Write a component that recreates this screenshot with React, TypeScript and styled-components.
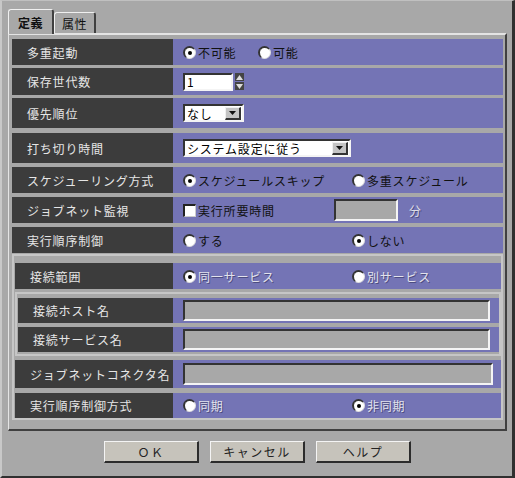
import React from 'react';
import styled, { createGlobalStyle } from 'styled-components';

const GlobalStyle = createGlobalStyle`
  html, body {
    margin: 0;
    padding: 0;
    background: #a8a8a8;
  }
  * { box-sizing: border-box; }
`;

const FONT = `"Noto Sans CJK JP", "Noto Sans", sans-serif`;
const BLUE = '#7474b5';
const DARK = '#3c3c3c';
const GRAY = '#a8a8a8';

const Window = styled.div`
  width: 515px;
  height: 478px;
  background: ${GRAY};
  font-family: ${FONT};
  font-size: 12px;
  border-left: 2px solid #c8c8c8;
  border-top: 1px solid #c0c0c0;
  border-right: 3px solid #303030;
  border-bottom: 2px solid #303030;
  display: flex;
  flex-direction: column;
  padding: 7px 3px 0 6px;
`;

const TabBar = styled.div`
  display: flex;
  align-items: flex-end;
  height: 25px;
`;

const Tab = styled.div<{ $active?: boolean }>`
  height: ${(p) => (p.$active ? 25 : 21)}px;
  padding: 0 ${(p) => (p.$active ? 9 : 7)}px;
  display: flex;
  align-items: center;
  font-weight: ${(p) => (p.$active ? 700 : 400)};
  color: #111;
  border-top: 1px solid #f0f0f0;
  border-left: 1px solid #f0f0f0;
  border-right: 2px solid #404040;
  border-radius: 3px 3px 0 0;
  margin-bottom: ${(p) => (p.$active ? -1 : 0)}px;
  background: ${GRAY};
  position: relative;
  z-index: ${(p) => (p.$active ? 2 : 1)};
  letter-spacing: 0.5px;
`;

const Panel = styled.div`
  width: 499px;
  height: 398px;
  border-top: 2px solid #e4e4e4;
  border-left: 1px solid #e4e4e4;
  border-right: 2px solid #404040;
  border-bottom: 2px solid #404040;
  padding: 4px 2px 0 3px;
  display: flex;
  flex-direction: column;
`;

const Row = styled.div<{ $h: number; $mt?: number }>`
  display: flex;
  height: ${(p) => p.$h}px;
  margin-top: ${(p) => p.$mt ?? 0}px;
`;

const LabelCell = styled.div<{ $w: number }>`
  width: ${(p) => p.$w}px;
  flex: none;
  background: ${DARK};
  color: #e6e6e6;
  display: flex;
  align-items: center;
  padding-left: 15px;
  letter-spacing: 0.8px;
  white-space: nowrap;
`;

const ValueCell = styled.div`
  flex: 1;
  background: ${BLUE};
  display: flex;
  align-items: center;
  padding-left: 10px;
  color: #111;
  letter-spacing: 0.8px;
  white-space: nowrap;
`;

const Option = styled.div<{ $w?: number; $disabled?: boolean }>`
  display: flex;
  align-items: center;
  gap: 2px;
  width: ${(p) => (p.$w ? `${p.$w}px` : 'auto')};
  color: ${(p) => (p.$disabled ? '#e2e2ec' : '#111')};
  text-shadow: ${(p) => (p.$disabled ? '1px 1px 0 #4c4c80' : 'none')};
`;

const RadioDot = styled.span<{ $checked?: boolean }>`
  width: 13px;
  height: 13px;
  border-radius: 50%;
  background: #fff;
  border-top: 2px solid #333;
  border-left: 2px solid #333;
  border-right: 1px solid #ddd;
  border-bottom: 1px solid #ddd;
  display: inline-flex;
  align-items: center;
  justify-content: center;
  flex: none;
  &::after {
    content: '';
    width: 4px;
    height: 4px;
    border-radius: 50%;
    background: ${(p) => (p.$checked ? '#000' : 'transparent')};
  }
`;

const CheckBox = styled.span`
  width: 13px;
  height: 13px;
  background: #fff;
  border-top: 2px solid #222;
  border-left: 2px solid #222;
  border-right: 1px solid #ccc;
  border-bottom: 1px solid #ccc;
  flex: none;
`;

const TextBox = styled.div<{ $w: number; $h: number; $disabled?: boolean }>`
  width: ${(p) => p.$w}px;
  height: ${(p) => p.$h}px;
  background: ${(p) => (p.$disabled ? GRAY : '#fff')};
  border-top: 2px solid #333;
  border-left: 2px solid #333;
  border-right: 2px solid #f4f4f4;
  border-bottom: 2px solid #f4f4f4;
  display: flex;
  align-items: center;
  padding-left: 2px;
  color: #000;
  flex: none;
`;

const Spin = styled.div`
  display: flex;
  flex-direction: column;
  gap: 1px;
  margin-left: 2px;
`;

const SpinBtn = styled.div`
  width: 9px;
  height: 8px;
  background: #444;
  display: flex;
  align-items: center;
  justify-content: center;
`;

const DropBtn = styled.div`
  width: 16px;
  height: 13px;
  margin-left: auto;
  margin-right: 1px;
  background: #c4c4c4;
  border-top: 1px solid #f0f0f0;
  border-left: 1px solid #f0f0f0;
  border-right: 2px solid #333;
  border-bottom: 2px solid #333;
  display: flex;
  align-items: center;
  justify-content: center;
`;

const Unit = styled.span`
  margin-left: 11px;
  color: #dcdce8;
  text-shadow: 1px 1px 0 #4c4c80;
`;

const GroupBox = styled.div<{ $mt: number; $pad: string }>`
  margin-top: ${(p) => p.$mt}px;
  border: 2px solid #c6c6c6;
  padding: ${(p) => p.$pad};
  display: flex;
  flex-direction: column;
`;

const ButtonBar = styled.div`
  display: flex;
  gap: 11px;
  padding-left: 96px;
  margin-top: 10px;
`;

const Button = styled.div`
  width: 95px;
  height: 22px;
  background: #c6c3bb;
  border-top: 1px solid #f4f4f4;
  border-left: 1px solid #f4f4f4;
  border-right: 2px solid #2c2c2c;
  border-bottom: 2px solid #2c2c2c;
  display: flex;
  align-items: center;
  justify-content: center;
  color: #222;
  letter-spacing: 1.5px;
`;

const Tri = ({ up }: { up?: boolean }) => (
  <svg width="7" height="5" viewBox="0 0 7 5">
    <polygon points={up ? '3.5,0 7,5 0,5' : '0,0 7,0 3.5,5'} fill="#ddd" />
  </svg>
);

const DownTri = () => (
  <svg width="7" height="4" viewBox="0 0 7 4">
    <polygon points="0,0 7,0 3.5,4" fill="#111" />
  </svg>
);

export default function App(): JSX.Element {
  return (
    <Window>
      <GlobalStyle />
      <TabBar>
        <Tab $active>定義</Tab>
        <Tab>属性</Tab>
      </TabBar>
      <Panel>
        <Row $h={26}>
          <LabelCell $w={161}>多重起動</LabelCell>
          <ValueCell>
            <Option $w={75}>
              <RadioDot $checked />
              不可能
            </Option>
            <Option>
              <RadioDot />
              可能
            </Option>
          </ValueCell>
        </Row>
        <Row $h={27} $mt={3}>
          <LabelCell $w={161}>保存世代数</LabelCell>
          <ValueCell>
            <TextBox $w={50} $h={18}>1</TextBox>
            <Spin>
              <SpinBtn>
                <Tri up />
              </SpinBtn>
              <SpinBtn>
                <Tri />
              </SpinBtn>
            </Spin>
          </ValueCell>
        </Row>
        <Row $h={30} $mt={3}>
          <LabelCell $w={161}>優先順位</LabelCell>
          <ValueCell>
            <TextBox $w={61} $h={18}>
              なし
              <DropBtn>
                <DownTri />
              </DropBtn>
            </TextBox>
          </ValueCell>
        </Row>
        <Row $h={30} $mt={5}>
          <LabelCell $w={161}>打ち切り時間</LabelCell>
          <ValueCell>
            <TextBox $w={168} $h={18}>
              システム設定に従う
              <DropBtn>
                <DownTri />
              </DropBtn>
            </TextBox>
          </ValueCell>
        </Row>
        <Row $h={26} $mt={4}>
          <LabelCell $w={161}>スケジューリング方式</LabelCell>
          <ValueCell>
            <Option $w={169}>
              <RadioDot $checked />
              スケジュールスキップ
            </Option>
            <Option>
              <RadioDot />
              多重スケジュール
            </Option>
          </ValueCell>
        </Row>
        <Row $h={26} $mt={4}>
          <LabelCell $w={161}>ジョブネット監視</LabelCell>
          <ValueCell>
            <Option $w={151}>
              <CheckBox />
              実行所要時間
            </Option>
            <TextBox $w={64} $h={22} $disabled />
            <Unit>分</Unit>
          </ValueCell>
        </Row>
        <Row $h={26} $mt={4}>
          <LabelCell $w={161}>実行順序制御</LabelCell>
          <ValueCell>
            <Option $w={169}>
              <RadioDot />
              する
            </Option>
            <Option>
              <RadioDot $checked />
              しない
            </Option>
          </ValueCell>
        </Row>

        <GroupBox $mt={1} $pad="7px 0 0 1px">
          <Row $h={26}>
            <LabelCell $w={158}>接続範囲</LabelCell>
            <ValueCell>
              <Option $w={169} $disabled>
                <RadioDot $checked />
                同一サービス
              </Option>
              <Option $disabled>
                <RadioDot />
                別サービス
              </Option>
            </ValueCell>
          </Row>

          <GroupBox $mt={3} $pad="4px 0 2px 1px">
            <Row $h={25}>
              <LabelCell $w={155}>接続ホスト名</LabelCell>
              <ValueCell>
                <TextBox $w={307} $h={21} $disabled />
              </ValueCell>
            </Row>
            <Row $h={25} $mt={4}>
              <LabelCell $w={155}>接続サービス名</LabelCell>
              <ValueCell>
                <TextBox $w={307} $h={21} $disabled />
              </ValueCell>
            </Row>
          </GroupBox>

          <Row $h={28} $mt={4}>
            <LabelCell $w={158}>ジョブネットコネクタ名</LabelCell>
            <ValueCell>
              <TextBox $w={310} $h={22} $disabled />
            </ValueCell>
          </Row>
          <Row $h={25} $mt={5}>
            <LabelCell $w={158}>実行順序制御方式</LabelCell>
            <ValueCell>
              <Option $w={169} $disabled>
                <RadioDot />
                同期
              </Option>
              <Option $disabled>
                <RadioDot $checked />
                非同期
              </Option>
            </ValueCell>
          </Row>
        </GroupBox>
      </Panel>
      <ButtonBar>
        <Button>ＯＫ</Button>
        <Button>キャンセル</Button>
        <Button>ヘルプ</Button>
      </ButtonBar>
    </Window>
  );
}
